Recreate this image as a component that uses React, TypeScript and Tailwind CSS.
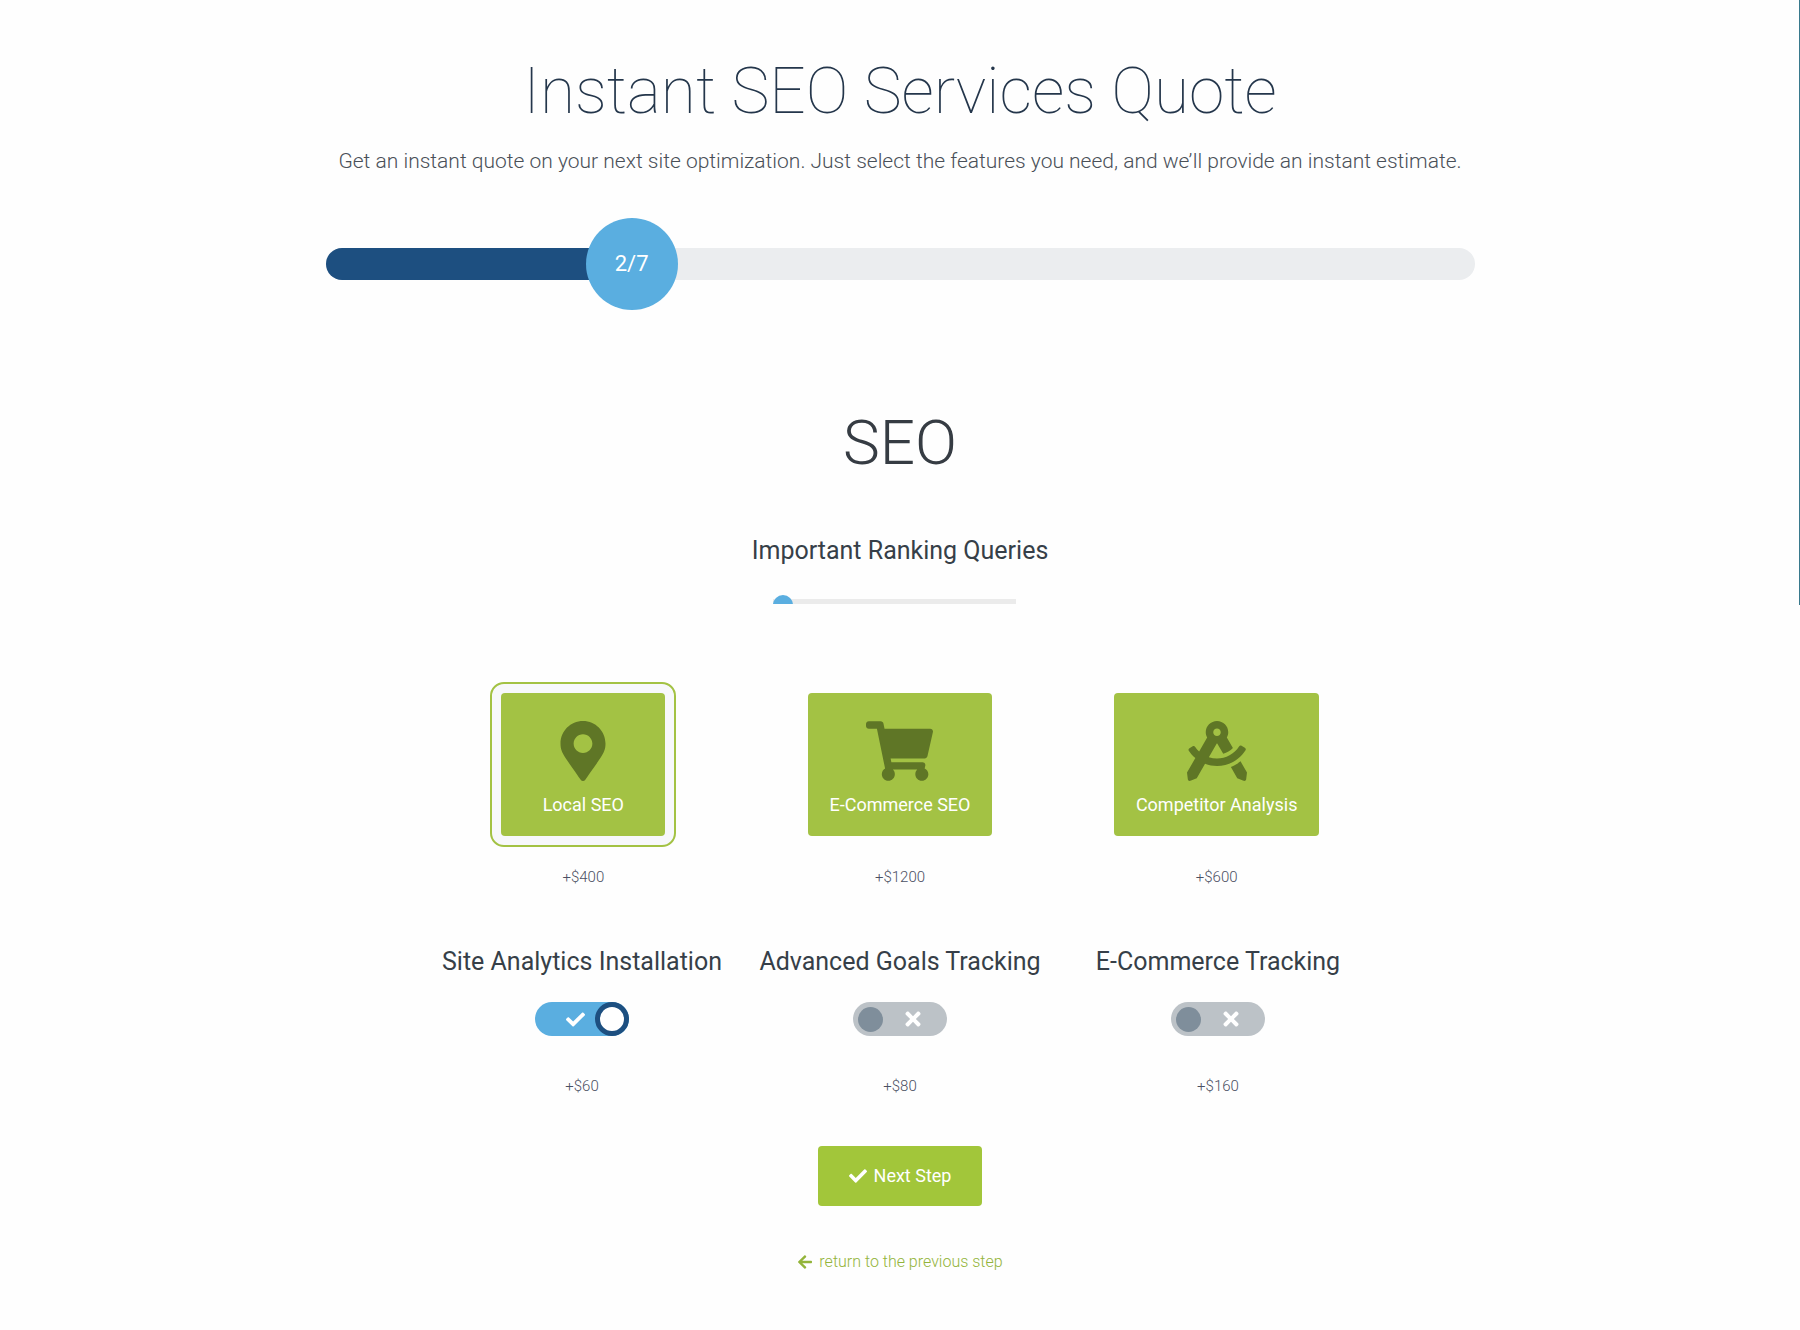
import { useState } from "react";
import type { ComponentType } from "react";
import {
  FaArrowLeft,
  FaCheck,
  FaDraftingCompass,
  FaMapMarkerAlt,
  FaShoppingCart,
  FaTimes,
} from "react-icons/fa";

type Feature = {
  id: string;
  label: string;
  price: number;
  Icon: ComponentType<{ className?: string }>;
  iconSize: string;
};

type Addon = {
  id: string;
  label: string;
  price: number;
};

const FEATURES: Feature[] = [
  {
    id: "local",
    label: "Local SEO",
    price: 400,
    Icon: FaMapMarkerAlt,
    iconSize: "w-[60px]",
  },
  {
    id: "ecommerce",
    label: "E-Commerce SEO",
    price: 1200,
    Icon: FaShoppingCart,
    iconSize: "w-[67px]",
  },
  {
    id: "competitor",
    label: "Competitor Analysis",
    price: 600,
    Icon: FaDraftingCompass,
    iconSize: "w-[60px]",
  },
];

const ADDONS: Addon[] = [
  { id: "analytics", label: "Site Analytics Installation", price: 60 },
  { id: "goals", label: "Advanced Goals Tracking", price: 80 },
  { id: "tracking", label: "E-Commerce Tracking", price: 160 },
];

function Price({ value }: { value: number }) {
  return <p className="text-[15px] leading-6 font-light text-[#4b5063]">+${value}</p>;
}

function StepProgress({ step, total }: { step: number; total: number }) {
  const width = ((step - 0.135) / total) * 100;

  return (
    <div
      role="progressbar"
      aria-valuenow={step}
      aria-valuemin={1}
      aria-valuemax={total}
      aria-label="Quote progress"
      className="mt-[71px] h-8 w-full rounded-full bg-[#ebedef]"
    >
      <div
        className="relative h-full rounded-l-full bg-[#1d4f80]"
        style={{ width: `${width}%` }}
      >
        <span className="absolute top-1/2 right-0 flex size-[92px] translate-x-1/2 -translate-y-1/2 items-center justify-center rounded-full bg-[#5aaee0] pb-0.5 text-[22px] text-white">
          {step}/{total}
        </span>
      </div>
    </div>
  );
}

function QueriesSlider() {
  const [value, setValue] = useState(0);

  return (
    <div className="mt-[52px] flex flex-col items-center">
      <label htmlFor="queries" className="text-[25px] leading-8 text-[#363f48]">
        Important Ranking Queries
      </label>
      <div className="mt-7 mr-3 h-[9px] w-[243px] overflow-hidden">
        <input
          id="queries"
          type="range"
          min={0}
          max={20}
          value={value}
          onChange={(e) => setValue(Number(e.target.value))}
          className="block h-5 w-full appearance-none bg-transparent bg-[linear-gradient(#ebebeb,#ebebeb)] bg-[length:100%_12px] bg-[position:0_4px] bg-no-repeat [&::-webkit-slider-thumb]:size-5 [&::-webkit-slider-thumb]:appearance-none [&::-webkit-slider-thumb]:rounded-full [&::-webkit-slider-thumb]:bg-[#5aaee0]"
        />
      </div>
    </div>
  );
}

function FeatureCard({
  feature,
  selected,
  onToggle,
}: {
  feature: Feature;
  selected: boolean;
  onToggle: () => void;
}) {
  const { label, price, Icon, iconSize } = feature;

  return (
    <div className="flex flex-col items-center">
      <div
        className={`rounded-[14px] border-2 p-[9px] ${
          selected ? "border-[#a3c244] bg-[#f7f8fb]" : "border-transparent"
        }`}
      >
        <button
          type="button"
          aria-pressed={selected}
          onClick={onToggle}
          className="flex h-[143px] min-w-[164px] cursor-pointer flex-col items-center rounded bg-[#a3c244] px-[22px] pt-7"
        >
          <Icon className={`h-[60px] text-[#5f7626] ${iconSize}`} />
          <span className="mt-3 text-lg leading-6 text-white">{label}</span>
        </button>
      </div>
      <div className="mt-[18px]">
        <Price value={price} />
      </div>
    </div>
  );
}

function AddonSwitch({
  addon,
  checked,
  onToggle,
}: {
  addon: Addon;
  checked: boolean;
  onToggle: () => void;
}) {
  return (
    <div className="flex flex-col items-center">
      <label htmlFor={addon.id} className="text-[25px] leading-8 whitespace-nowrap text-[#363f48]">
        {addon.label}
      </label>
      <button
        id={addon.id}
        type="button"
        role="switch"
        aria-checked={checked}
        onClick={onToggle}
        className={`mt-6 flex h-[34px] w-[94px] cursor-pointer items-center rounded-full ${
          checked ? "justify-end gap-2.5 bg-[#5aaee0]" : "justify-start gap-[19px] bg-[#bcc2c7] pl-[5px]"
        }`}
      >
        {checked ? (
          <>
            <FaCheck className="size-[19px] text-white" />
            <span className="size-[34px] rounded-full border-[5px] border-[#1d4f80] bg-white" />
          </>
        ) : (
          <>
            <span className="size-[25px] rounded-full bg-[#7f8e9b]" />
            <FaTimes className="size-[22px] text-white" />
          </>
        )}
      </button>
      <div className="mt-[38px]">
        <Price value={addon.price} />
      </div>
    </div>
  );
}

export default function App() {
  const [features, setFeatures] = useState<string[]>(["local"]);
  const [addons, setAddons] = useState<string[]>(["analytics"]);

  const toggle = (list: string[], id: string) =>
    list.includes(id) ? list.filter((item) => item !== id) : [...list, id];

  return (
    <div className="relative min-h-screen bg-[#fefefe] font-['Roboto',sans-serif]">
      <div className="absolute top-0 right-0 h-[605px] w-px bg-[#38798c]" />
      <main className="mx-auto flex max-w-[1149px] flex-col items-center pt-[50px] pb-10">
        <h1 className="text-center text-[64px] leading-[84px] font-thin text-[#24364b]">
          Instant SEO Services Quote
        </h1>
        <p className="mt-[11px] text-center text-[21px] leading-8 font-light text-[#4a5058]">
          Get an instant quote on your next site optimization. Just select the features you need,
          and we’ll provide an instant estimate.
        </p>
        <StepProgress step={2} total={7} />

        <h2 className="mt-[123px] text-[62px] leading-[80px] font-light text-[#363c43]">SEO</h2>
        <QueriesSlider />

        <section className="mt-[78px] grid w-full max-w-[950px] grid-cols-3">
          {FEATURES.map((feature) => (
            <FeatureCard
              key={feature.id}
              feature={feature}
              selected={features.includes(feature.id)}
              onToggle={() => setFeatures(toggle(features, feature.id))}
            />
          ))}
        </section>

        <section className="mt-[57px] grid w-full max-w-[954px] grid-cols-3">
          {ADDONS.map((addon) => (
            <AddonSwitch
              key={addon.id}
              addon={addon}
              checked={addons.includes(addon.id)}
              onToggle={() => setAddons(toggle(addons, addon.id))}
            />
          ))}
        </section>

        <button
          type="button"
          className="mt-12 flex h-[60px] w-[164px] cursor-pointer items-center justify-center gap-[7px] rounded bg-[#a2c63a] text-lg text-white"
        >
          <FaCheck className="size-[18px]" />
          Next Step
        </button>
        <a
          href="#"
          className="mt-11 flex items-center gap-1.5 text-base leading-6 font-light text-[#93b43a]"
        >
          <FaArrowLeft className="size-4" />
          return to the previous step
        </a>
      </main>
    </div>
  );
}
